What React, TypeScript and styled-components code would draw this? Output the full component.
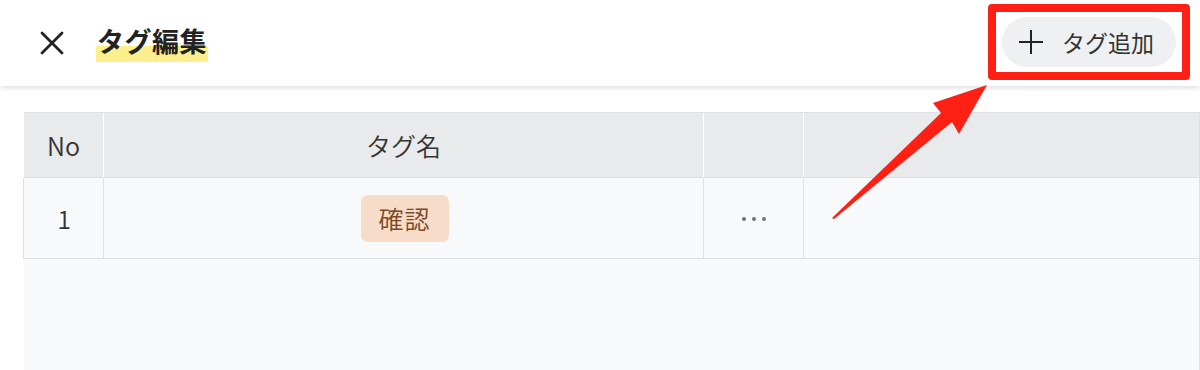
import React from "react";
import styled, { createGlobalStyle } from "styled-components";

const GlobalStyle = createGlobalStyle`
  html, body {
    margin: 0;
    padding: 0;
    background: #ffffff;
  }
  body {
    font-family: "Noto Sans CJK JP", "Noto Sans", sans-serif;
    color: #333333;
  }
`;

interface TagRow {
  no: number;
  name: string;
}

const rows: TagRow[] = [{ no: 1, name: "確認" }];

export default function App(): JSX.Element {
  return (
    <>
      <GlobalStyle />
      <Page>
        <Header>
          <TitleGroup>
            <CloseButton aria-label="close">
              <svg width="26" height="26" viewBox="0 0 26 26">
                <path
                  d="M3 3 L23 23 M23 3 L3 23"
                  stroke="#222"
                  strokeWidth="2.8"
                  strokeLinecap="round"
                />
              </svg>
            </CloseButton>
            <Title>タグ編集</Title>
          </TitleGroup>
          <AddButton>
            <svg width="26" height="26" viewBox="0 0 26 26">
              <path d="M13 1 V25 M1 13 H25" stroke="#222" strokeWidth="2" />
            </svg>
            <span>タグ追加</span>
          </AddButton>
          <Highlight />
        </Header>
        <Content>
          <Table>
            <HeadCell>No</HeadCell>
            <HeadCell>タグ名</HeadCell>
            <HeadCell />
            <HeadCell $last />
            {rows.map((r) => (
              <React.Fragment key={r.no}>
                <BodyCell>{r.no}</BodyCell>
                <BodyCell>
                  <TagChip>{r.name}</TagChip>
                </BodyCell>
                <BodyCell>
                  <Dots>
                    <i />
                    <i />
                    <i />
                  </Dots>
                </BodyCell>
                <BodyCell />
              </React.Fragment>
            ))}
          </Table>
        </Content>
        <Arrow width="1200" height="370" viewBox="0 0 1200 370">
          <polygon
            points="832,218 941,113 933,103 987,85 959,134 952,122 834,219"
            fill="#ff2014"
          />
        </Arrow>
      </Page>
    </>
  );
}

const Page = styled.div`
  position: relative;
  width: 1200px;
  height: 370px;
  overflow: hidden;
  display: flex;
  flex-direction: column;
`;

const Header = styled.header`
  position: relative;
  z-index: 2;
  height: 86px;
  flex-shrink: 0;
  background: #fff;
  box-shadow: 0 2px 5px rgba(0, 0, 0, 0.13);
  display: flex;
  align-items: center;
  justify-content: space-between;
  padding: 0 24px 0 39px;
  box-sizing: border-box;
`;

const TitleGroup = styled.div`
  display: flex;
  align-items: center;
  gap: 31px;
`;

const CloseButton = styled.button`
  border: none;
  background: none;
  padding: 0;
  width: 26px;
  height: 26px;
  display: flex;
  cursor: pointer;
`;

const Title = styled.h1`
  margin: 4px 0 0;
  font-size: 27px;
  font-weight: 700;
  color: #222;
  letter-spacing: 0.5px;
  line-height: 27px;
  height: 36px;
  padding: 0 1px;
  box-sizing: border-box;
  background: linear-gradient(
    to bottom,
    transparent 0,
    transparent 19px,
    #fdf08c 19px,
    #fdf08c 35px,
    transparent 35px
  );
`;

const AddButton = styled.button`
  display: flex;
  align-items: center;
  gap: 18px;
  height: 50px;
  width: 174px;
  padding: 0 0 0 16px;
  box-sizing: border-box;
  border: none;
  border-radius: 25px;
  background: #eef0f2;
  font-family: "Noto Sans CJK JP", sans-serif;
  font-size: 23px;
  color: #333;
  cursor: pointer;
  margin-top: -2px;
`;

const Highlight = styled.div`
  position: absolute;
  left: 988px;
  top: 4px;
  width: 202px;
  height: 76px;
  box-sizing: border-box;
  border: 8px solid #ff1f14;
  border-radius: 4px;
  pointer-events: none;
`;

const Content = styled.main`
  flex: 1;
  padding: 26px 0 0 24px;
  display: flex;
`;

const Table = styled.div`
  flex: 1;
  display: grid;
  grid-template-columns: 80px 600px 100px 1fr;
  grid-template-rows: 65px 81px;
  align-content: start;
  background: #f8f9fb;
  border-top: 1px solid #dfe0e3;
  border-right: 1px solid #dfe0e3;
`;

const HeadCell = styled.div<{ $last?: boolean }>`
  background: #e9eaec;
  border-right: ${(p) => (p.$last ? "none" : "1px solid #ffffff")};
  border-bottom: 1px solid #dfe0e3;
  display: flex;
  align-items: center;
  justify-content: center;
  font-size: 25px;
  font-weight: 350;
  color: #333;
`;

const BodyCell = styled.div`
  border-left: 1px solid #dfe0e3;
  border-bottom: 1px solid #dfe0e3;
  display: flex;
  align-items: center;
  justify-content: center;
  font-size: 25px;
  font-weight: 350;
  color: #333;
  margin-left: -1px;
`;

const TagChip = styled.span`
  display: inline-flex;
  align-items: center;
  justify-content: center;
  width: 88px;
  height: 47px;
  border-radius: 7px;
  background: #f6dcc9;
  color: #7a4a27;
  font-size: 25px;
  letter-spacing: 1px;
  margin-left: 1px;
`;

const Dots = styled.span`
  display: flex;
  gap: 5.5px;
  margin-top: 2px;
  i {
    width: 4.5px;
    height: 4.5px;
    border-radius: 50%;
    background: #6b7280;
  }
`;

const Arrow = styled.svg`
  position: absolute;
  left: 0;
  top: 0;
  z-index: 3;
  pointer-events: none;
`;
